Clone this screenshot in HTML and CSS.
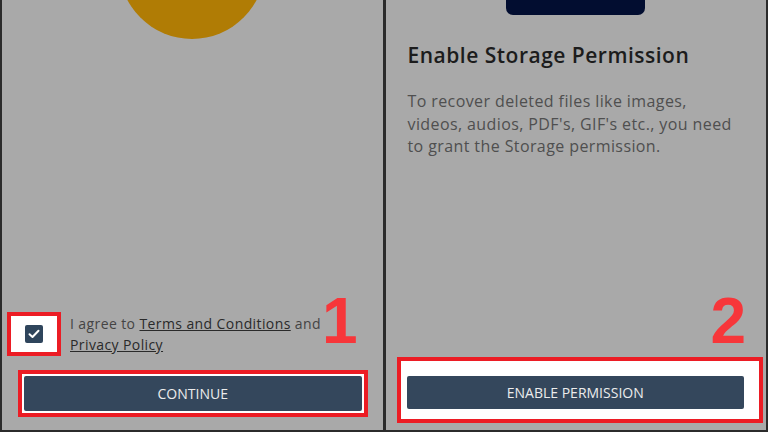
FILE: index.html
```html
<!DOCTYPE html>
<html lang="en">
<head>
    <meta charset="UTF-8">
    <meta name="viewport" content="width=device-width, initial-scale=1.0">
    <title>Storage Permission</title>
    <link rel="stylesheet" href="styles.css">
</head>
<body>
    <div id="screens">
        <div class="screen" id="screenAgree">
            <div class="logo-circle"></div>
            <div class="spacer"></div>
            <div class="agree-row">
                <div class="check-box highlight">
                    <span class="check">
                        <svg width="12" height="10" viewBox="0 0 12 10">
                            <path d="M1.5 5.2 L4.5 8 L10.5 1.8" fill="none" stroke="#fff" stroke-width="2" stroke-linecap="round" stroke-linejoin="round"/>
                        </svg>
                    </span>
                </div>
                <p class="agree-text">I agree to <a href="#">Terms and Conditions</a> and <a href="#">Privacy Policy</a></p>
            </div>
            <div class="btn-wrap highlight">
                <button class="btn">CONTINUE</button>
            </div>
            <span class="step-num step-one">1</span>
        </div>

        <div class="screen" id="screenPermission">
            <div class="app-card"><span class="card-dot"></span></div>
            <h2>Enable Storage Permission</h2>
            <p class="desc">To recover deleted files like images, videos, audios, PDF's, GIF's etc., you need to grant the Storage permission.</p>
            <div class="spacer"></div>
            <div class="btn-wrap highlight wide">
                <button class="btn">ENABLE PERMISSION</button>
            </div>
            <span class="step-num step-two">2</span>
        </div>
    </div>
</body>
</html>
```

FILE: styles.css
```css
* {
    box-sizing: border-box;
}
body {
    margin: 0;
    background-color: #2a2a2a;
    font-family: "Open Sans", "Liberation Sans", sans-serif;
}
#screens {
    display: flex;
    height: 432px;
    width: 768px;
    gap: 3px;
    padding: 0 2px 2px 2px;
    background-color: #2b2b2b;
}
.screen {
    position: relative;
    flex: 1;
    display: flex;
    flex-direction: column;
    background-color: #a9a9a9;
    overflow: hidden;
}
.spacer {
    flex: 1;
}

/* left screen */
.logo-circle {
    width: 146px;
    height: 146px;
    border-radius: 50%;
    background-color: #b07c05;
    margin: -107px auto 0 auto;
    flex-shrink: 0;
}
.agree-row {
    display: flex;
    align-items: center;
    gap: 9px;
    padding-left: 5px;
    margin-bottom: 14px;
}
.highlight {
    border: 4px solid #ec1c24;
    background-color: #fff;
}
.check-box {
    width: 54px;
    height: 44px;
    display: flex;
    align-items: center;
    justify-content: center;
    flex-shrink: 0;
}
.check {
    width: 18px;
    height: 18px;
    border-radius: 2px;
    background-color: #2f455c;
    display: flex;
    align-items: center;
    justify-content: center;
}
.agree-text {
    margin: 0;
    font-size: 14px;
    line-height: 21px;
    letter-spacing: 0.4px;
    color: #444;
    width: 280px;
}
.agree-text a {
    color: #2a2a2a;
    font-weight: 500;
    text-decoration: underline;
}
.btn-wrap {
    padding: 2px;
    margin: 0 15px 13px 16px;
}
.btn {
    display: block;
    width: 100%;
    height: 35px;
    border: none;
    border-radius: 2px;
    background-color: #34475c;
    color: #ececec;
    font-family: "Open Sans", "Liberation Sans", sans-serif;
    font-size: 14px;
}

/* right screen */
.app-card {
    position: relative;
    width: 139px;
    height: 30px;
    margin: -15px 0 0 120px;
    border-radius: 7px;
    background-color: #020d30;
    flex-shrink: 0;
}
.card-dot {
    position: absolute;
    left: 12px;
    top: -8px;
    width: 14px;
    height: 14px;
    border-radius: 50%;
    background-color: #0b1f52;
}
h2 {
    margin: 26px 0 0 22px;
    font-size: 21px;
    font-weight: 600;
    color: #1c1c1c;
    letter-spacing: 0.5px;
}
.desc {
    margin: 21px 0 0 22px;
    max-width: 328px;
    font-size: 16px;
    line-height: 22.5px;
    letter-spacing: 0.4px;
    color: #4f4f4f;
}
.btn-wrap.wide {
    margin: 0 3px 7px 11px;
    padding: 15px 15px 10px 6px;
}
.wide .btn {
    height: 33px;
}

.step-num {
    position: absolute;
    font-family: "Liberation Sans", Arial, sans-serif;
    font-weight: bold;
    font-size: 64px;
    line-height: 1;
    color: #f7363a;
}
.step-one {
    right: 25px;
    top: 289px;
}
.step-two {
    right: 20px;
    top: 289px;
}
```
